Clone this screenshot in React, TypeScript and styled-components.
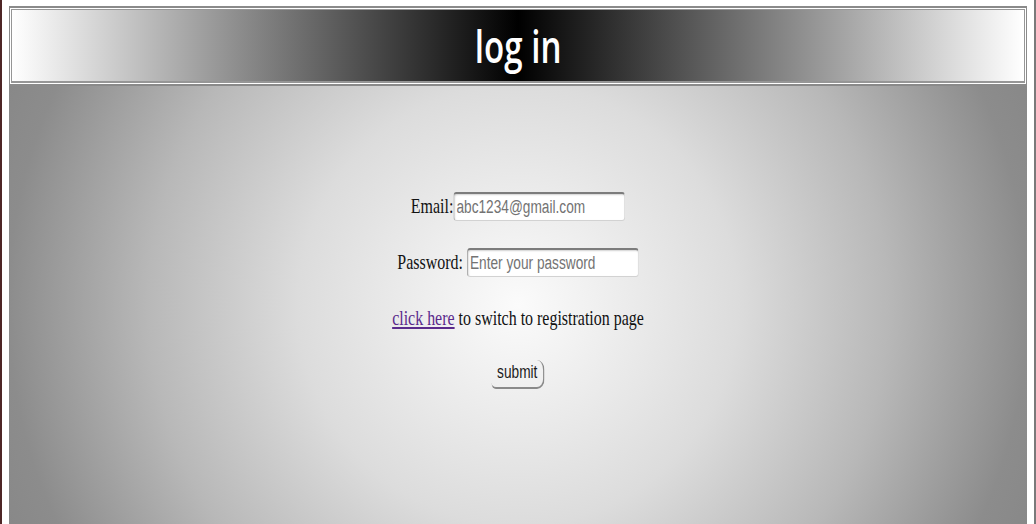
import React from "react";
import styled, { createGlobalStyle } from "styled-components";

const Global = createGlobalStyle`
  html, body { margin: 0; padding: 0; background: #ffffff; }
  body { overflow: hidden; }
`;

const Frame = styled.div`
  box-sizing: border-box;
  width: 1036px;
  height: 524px;
  display: flex;
  flex-direction: column;
  padding: 6px 7px 0 7px;
  border-left: 2px solid #4e2626;
  border-right: 2px solid #7a7a7a;
  background: #ffffff;
  overflow: hidden;
`;

const HeaderOuter = styled.header`
  box-sizing: border-box;
  height: 80px;
  flex: none;
  border: 1px solid #8a8a8a;
  border-top-width: 2px;
  border-bottom-width: 2px;
  padding: 1px;
  background: #ffffff;
  display: flex;
`;

const HeaderInner = styled.div`
  flex: 1;
  border: 1px solid #969696;
  border-bottom-width: 2px;
  background: linear-gradient(to right, #ffffff 0%, #000000 50%, #ffffff 100%);
  display: flex;
  align-items: center;
  justify-content: center;
`;

const Title = styled.h1`
  margin: 0;
  font-family: "Open Sans", "Liberation Sans", sans-serif;
  font-weight: 600;
  font-size: 46px;
  line-height: 1;
  color: #ffffff;
  transform: scaleX(0.72);
  position: relative;
  top: -1px;
`;

const Main = styled.main`
  flex: 1;
  background: radial-gradient(
    circle at 50% 50%,
    #fbfbfb 0px,
    #dcdcdc 220px,
    #b8b8b8 370px,
    #8c8c8c 510px,
    #848484 600px
  );
  padding-top: 106px;
`;

const Form = styled.form`
  display: flex;
  flex-direction: column;
  align-items: center;
  gap: 27px;
  transform: scaleX(0.76);
  font-family: "Liberation Serif", "Times New Roman", serif;
  font-size: 21px;
  color: #111111;
`;

const Row = styled.div`
  height: 29px;
  display: flex;
  align-items: center;
  white-space: pre;
`;

const Label = styled.label`
  line-height: 29px;
`;

const Input = styled.input`
  box-sizing: border-box;
  width: 226px;
  height: 29px;
  margin: 0;
  padding: 0 3px;
  font-family: "Liberation Sans", Arial, sans-serif;
  font-size: 18px;
  color: #222;
  background: #ffffff;
  border: 1px solid #d2d2d2;
  border-top: 2px solid #7c7c7c;
  border-left: 1px solid #8e8e8e;
  border-radius: 4px;
  box-shadow: inset 1px 1px 2px rgba(0, 0, 0, 0.18);
  outline: none;
  &::placeholder { color: #737373; }
`;

const Link = styled.a`
  color: #5b2b8c;
  text-decoration: underline;
`;

const Submit = styled.button`
  box-sizing: border-box;
  height: 29px;
  width: 70px;
  margin: 0;
  padding: 0 0 2px 0;
  font-family: "Liberation Sans", Arial, sans-serif;
  font-size: 18px;
  color: #1a1a1a;
  background: transparent;
  border: none;
  border-right: 2px solid #8a8a8a;
  border-bottom: 2px solid #8a8a8a;
  border-radius: 0 10px 10px 6px;
  cursor: pointer;
`;

export default function App() {
  return (
    <>
      <Global />
      <Frame>
        <HeaderOuter>
          <HeaderInner>
            <Title>log in</Title>
          </HeaderInner>
        </HeaderOuter>
        <Main>
          <Form onSubmit={(e) => e.preventDefault()}>
            <Row>
              <Label htmlFor="email">Email:</Label>
              <Input id="email" type="email" placeholder="abc1234@gmail.com" />
            </Row>
            <Row>
              <Label htmlFor="password">Password: </Label>
              <Input id="password" type="password" placeholder="Enter your password" />
            </Row>
            <Row>
              <span>
                <Link href="#">click here</Link> to switch to registration page
              </span>
            </Row>
            <Row>
              <Submit type="submit">submit</Submit>
            </Row>
          </Form>
        </Main>
      </Frame>
    </>
  );
}
